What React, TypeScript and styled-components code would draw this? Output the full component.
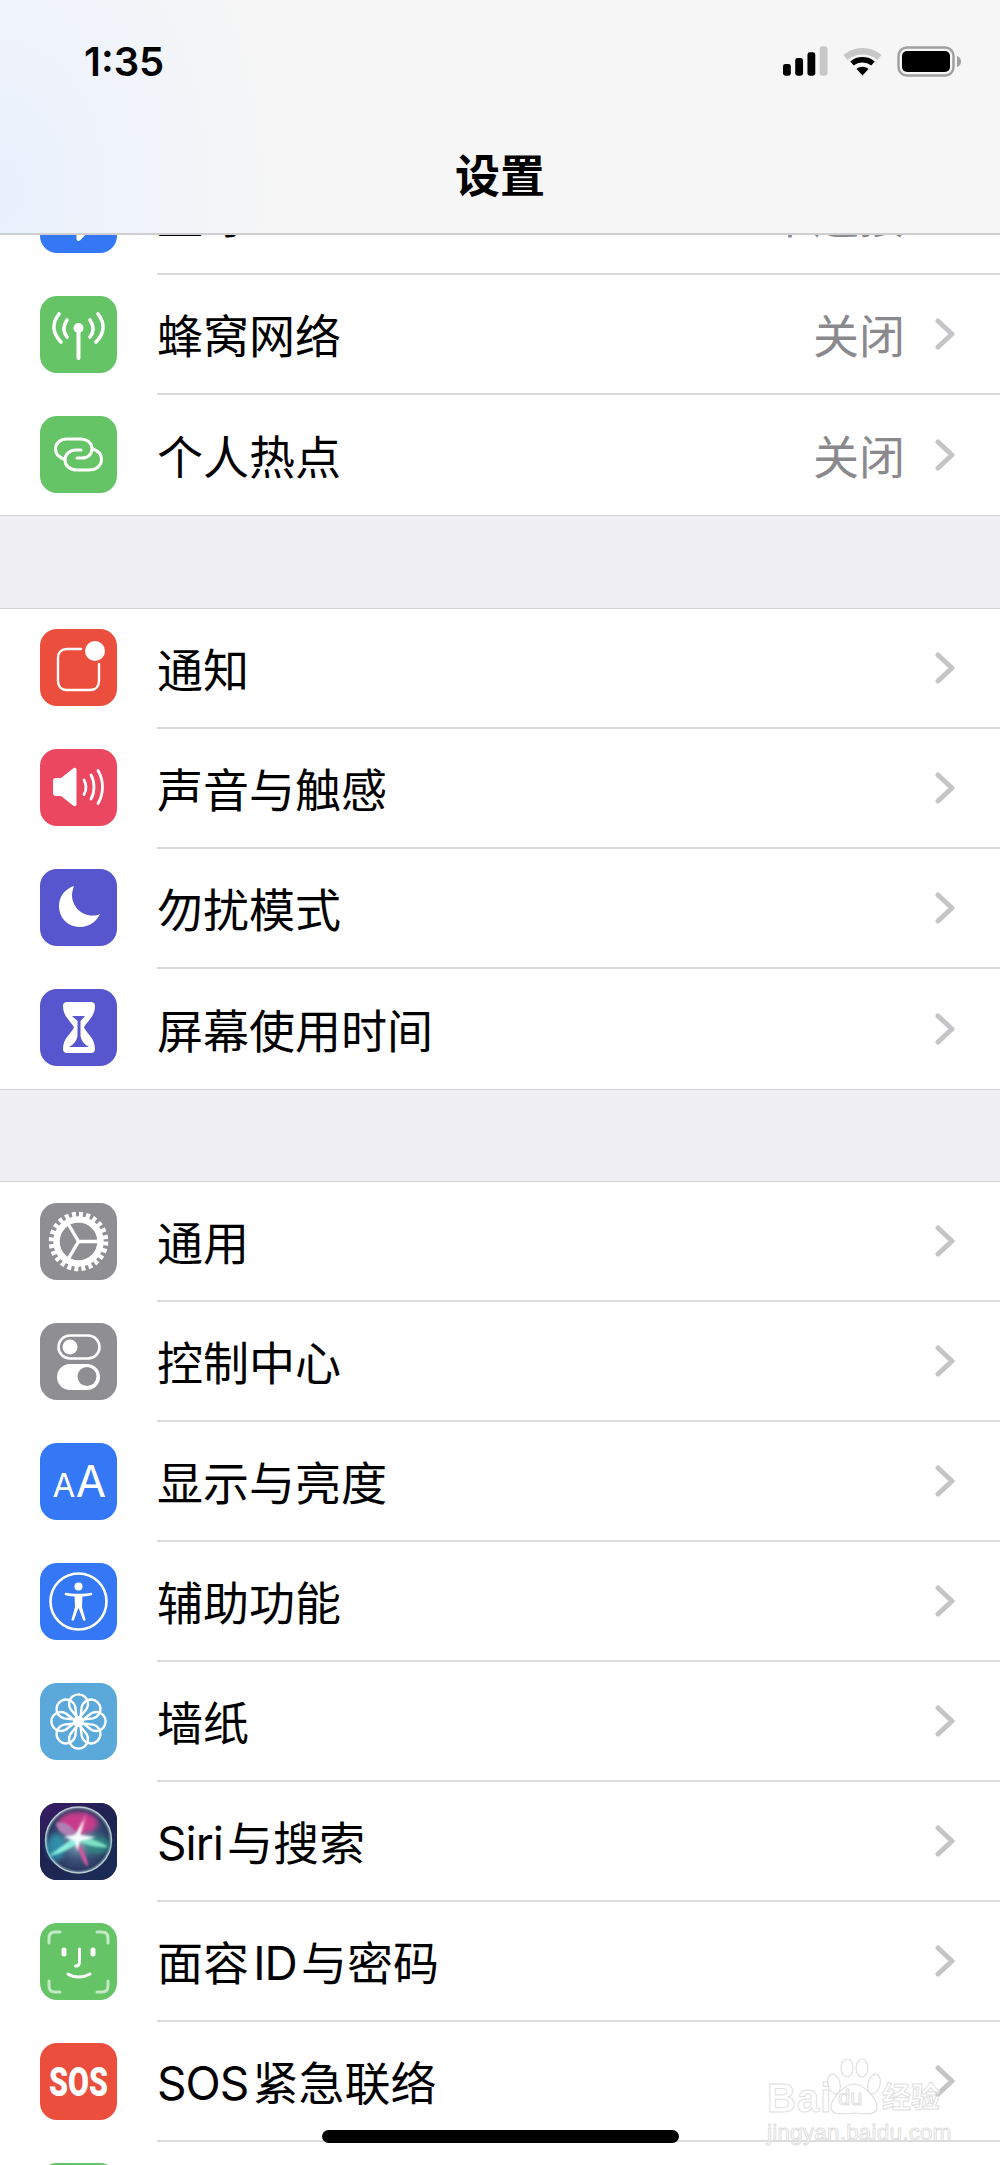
import React from "react";
import styled, { createGlobalStyle } from "styled-components";

const GlobalStyle = createGlobalStyle`
  html, body {
    margin: 0;
    padding: 0;
    background: #fff;
  }
  body {
    font-family: "Inter", "Noto Sans CJK SC", sans-serif;
    color: #000;
  }
`;

const Phone = styled.div`
  position: relative;
  width: 1000px;
  height: 2165px;
  overflow: hidden;
  background: #efeff4;
`;

const Header = styled.header`
  position: relative;
  z-index: 2;
  height: 235px;
  box-sizing: border-box;
  border-bottom: 2px solid #cfcfd2;
  background:
    radial-gradient(ellipse 280px 400px at 0 190px, #e9f1fd 0%, rgba(238, 243, 251, 0.85) 45%, rgba(245, 245, 245, 0) 100%),
    #f6f6f6;
`;

const StatusBar = styled.div`
  height: 122px;
  display: flex;
  align-items: center;
  justify-content: space-between;
  padding: 0 38px 0 84px;
`;

const Clock = styled.span`
  font-size: 40px;
  font-weight: 600;
`;

const StatusIcons = styled.div`
  display: flex;
  align-items: center;
  gap: 14px;
`;

const Title = styled.h1`
  margin: 0;
  height: 103px;
  display: flex;
  align-items: center;
  justify-content: center;
  font-size: 45px;
  font-weight: 700;
`;

const Scroller = styled.main`
  margin-top: -80px;
  display: flex;
  flex-direction: column;
  gap: 91.5px;
`;

const Group = styled.section`
  background: #fff;
  border-top: 1px solid #d2d2d6;
  border-bottom: 1px solid #d2d2d6;

  &:first-child {
    border-top: 0;
  }
`;

const Row = styled.div`
  height: 120px;
  display: flex;
  align-items: center;
  padding-left: 40px;
`;

const Tile = styled.div<{ $bg: string }>`
  flex: none;
  width: 77px;
  height: 77px;
  margin-bottom: 2px;
  border-radius: 17px;
  overflow: hidden;
  background: ${(p) => p.$bg};
  display: flex;

  svg {
    display: block;
  }
`;

const RowBody = styled.div<{ $last?: boolean }>`
  flex: 1;
  height: 100%;
  box-sizing: border-box;
  margin-left: 40px;
  padding-right: 45px;
  display: flex;
  align-items: center;
  border-bottom: ${(p) => (p.$last ? "0" : "2px solid #dcdcdf")};
`;

const Label = styled.span`
  flex: 1;
  padding-bottom: 2px;
  font-size: 46px;
  white-space: pre;
`;

const Latin = styled.span`
  letter-spacing: -1px;
`;

const Value = styled.span`
  padding-bottom: 2px;
  font-size: 46px;
  color: #8a8a8e;
  margin-right: 30px;
`;

const HomeBar = styled.div`
  position: absolute;
  z-index: 3;
  left: 322px;
  bottom: 22px;
  width: 357px;
  height: 13px;
  border-radius: 7px;
  background: #000;
`;

const Watermark = styled.div`
  position: absolute;
  z-index: 3;
  left: 767px;
  top: 2058px;
  width: 180px;
  height: 86px;
  pointer-events: none;
  font-family: "Liberation Sans", "Noto Sans CJK SC", sans-serif;
  color: rgba(255, 255, 255, 0.55);
  -webkit-text-stroke: 1px #dfdfdf;
`;

const MarkBrand = styled.div`
  display: flex;
  align-items: center;
  height: 34px;
  margin-top: 23px;
  font-size: 40px;
  font-weight: 700;
  line-height: 34px;
`;

const MarkPaw = styled.svg`
  position: absolute;
  left: 60px;
  top: 0;
`;

const MarkBai = styled.span`
  width: 64px;
  letter-spacing: 1px;
`;

const MarkDu = styled.span`
  position: relative;
  width: 50px;
  padding-left: 7px;
  box-sizing: border-box;
  font-size: 22px;
  font-weight: 400;
`;

const MarkCn = styled.span`
  font-size: 29px;
  font-weight: 700;
  white-space: nowrap;
  margin-left: 1px;
`;

const MarkSite = styled.div`
  margin-top: 6px;
  font-size: 22.5px;
  line-height: 24px;
  white-space: nowrap;
  letter-spacing: 0.2px;
`;

const Glyph = ({ children }: { children: React.ReactNode }) => (
  <svg width="77" height="77" viewBox="0 0 77 77" fill="none" stroke="#fff" strokeLinecap="round" strokeLinejoin="round">
    {children}
  </svg>
);

const Chevron = () => (
  <svg width="20" height="32" viewBox="0 0 20 32" fill="none" stroke="#c5c5c8" strokeWidth="5" strokeLinecap="round" strokeLinejoin="round">
    <path d="M3 3 L17 16 L3 29" />
  </svg>
);

const BluetoothIcon = () => (
  <Glyph>
    <path strokeWidth="4" d="M26 26 L51 50 L38.5 63 V14 L51 27 L26 51" />
  </Glyph>
);

const CellularIcon = () => (
  <Glyph>
    <circle cx="38.5" cy="32" r="5" fill="#fff" stroke="none" />
    <path strokeWidth="4" d="M38.5 32 V62" />
    <path strokeWidth="3.6" d="M27 24 C23 30 23 36 27 41 M50 24 C54 30 54 36 50 41" />
    <path strokeWidth="3.6" d="M19 18 C12 27 12 37 21 46 M58 18 C65 27 65 37 56 46" />
  </Glyph>
);

const HotspotIcon = () => (
  <Glyph>
    <g strokeWidth="3">
      <path d="M24 43 C18 41 15.5 37 15.5 33 C15.5 27 20.5 23 27 23 H40 C47 23 52 27 52 32.5 C52 38 48 42 42 42 H37" />
      <path d="M53 33 C59 35 61.5 39 61.5 43 C61.5 50 56 54 49 54 H37 C30 54 25 50 25 44 C25 38 30 34 36 34 H41" />
    </g>
  </Glyph>
);

const NotifyIcon = () => (
  <Glyph>
    <path strokeWidth="2.4" d="M41 20 H27 C21.5 20 18 23.5 18 29 V52 C18 57.5 21.5 61 27 61 H50 C55.5 61 59 57.5 59 52 V35" />
    <circle cx="55" cy="22" r="10" fill="#fff" stroke="none" />
  </Glyph>
);

const SoundIcon = () => (
  <Glyph>
    <path fill="#fff" stroke="none" d="M16 29 H21 L33 19.5 C35 18 36.5 19 36.5 21 V55 C36.5 57 35 58 33 56.5 L21 47 H16 C14 47 13 46 13 44 V32 C13 30 14 29 16 29 Z" />
    <path strokeWidth="2.8" d="M44 31 C46.5 35.5 46.5 41 44 45.5" />
    <path strokeWidth="2.8" d="M51 26 C55 33 55 43 51 50" />
    <path strokeWidth="2.8" d="M58 21.5 C64 31.5 64 44.5 58 54.5" />
  </Glyph>
);

const MoonIcon = () => (
  <Glyph>
    <path fill="#fff" stroke="none" d="M34 17 C24.5 20 19 28 19 37 C19 49 28 58 40 58 C49 58 56 53 60 45 C58 46 55 46.5 52 46.5 C41 46.5 32 37 32 26 C32 23 33 20 34 17 Z" />
  </Glyph>
);

const HourglassIcon = () => (
  <Glyph>
    <path fill="#fff" stroke="none" d="M27 13 H51 Q55 13 55 17 C55 28 47 32 44 38.5 C47 45 55 49 55 60 Q55 64 51 64 H27 Q23 64 23 60 C23 49 31 45 34 38.5 C31 32 23 28 23 17 Q23 13 27 13 Z" />
    <path fill="#5856ce" stroke="none" d="M32 27 H45 L40.5 32 V47 Q41.5 54 49 58 H29 Q36.5 54 37.5 47 V32 Z" />
  </Glyph>
);

const GearIcon = () => (
  <Glyph>
    <circle cx="38.5" cy="38.5" r="27" strokeWidth="5.5" strokeLinecap="butt" strokeDasharray="4 3.07" />
    <circle cx="38.5" cy="38.5" r="22" strokeWidth="6.5" />
    <path strokeWidth="3.4" d="M38.5 38.5 H58 M38.5 38.5 L28.5 21.5 M38.5 38.5 L28.5 55.5" />
  </Glyph>
);

const TogglesIcon = () => (
  <Glyph>
    <rect x="18.5" y="12.5" width="41" height="23" rx="11.5" strokeWidth="2.6" />
    <circle cx="30" cy="24" r="7.5" fill="#fff" stroke="none" />
    <rect x="17" y="41" width="43" height="26" rx="13" fill="#fff" stroke="none" />
    <circle cx="47" cy="53.5" r="9.5" fill="#8e8e93" stroke="none" />
  </Glyph>
);

const DisplayIcon = () => (
  <svg width="77" height="77" viewBox="0 0 77 77" fill="#fff" fontFamily="Inter, sans-serif">
    <text x="24" y="54" fontSize="33" textAnchor="middle">A</text>
    <text x="51" y="54" fontSize="44" textAnchor="middle">A</text>
  </svg>
);

const AccessIcon = () => (
  <Glyph>
    <circle cx="38.5" cy="38.5" r="28" strokeWidth="2.6" />
    <circle cx="38.5" cy="23.5" r="4" fill="#fff" stroke="none" />
    <path strokeWidth="2.6" d="M26 31 C31 32.5 46 32.5 51 31" />
    <path fill="#fff" stroke="none" d="M34.5 32 H42.5 L42 44 L45.5 56.5 C45.5 58 43.5 58 43 57 L38.8 45.5 H38.2 L34 57 C33.5 58 31.5 58 31.5 56.5 L35 44 Z" />
  </Glyph>
);

const FlowerIcon = () => (
  <Glyph>
    {[0, 45, 90, 135, 180, 225, 270, 315].map((a) => (
      <path
        key={a}
        transform={`rotate(${a} 38.5 38.5)`}
        strokeWidth="2.4"
        d="M30.5 26 A9.5 9.5 0 1 1 46.5 26 L38.5 36 Z"
      />
    ))}
    <circle cx="38.5" cy="38.5" r="5.5" fill="#fff" stroke="none" />
  </Glyph>
);

const SiriIcon = () => (
  <svg width="77" height="77" viewBox="0 0 77 77">
    <defs>
      <linearGradient id="siriBg" x1="0" y1="0" x2="0.6" y2="1">
        <stop offset="0" stopColor="#3a1a66" />
        <stop offset="0.5" stopColor="#1f2350" />
        <stop offset="1" stopColor="#1b2b55" />
      </linearGradient>
      <radialGradient id="siriOrb" cx="0.5" cy="0.5" r="0.5">
        <stop offset="0" stopColor="#8fb8c4" />
        <stop offset="0.6" stopColor="#3c5478" />
        <stop offset="0.9" stopColor="#2c3a64" />
        <stop offset="1" stopColor="#7ea0ac" />
      </radialGradient>
      <filter id="siriSoft" x="-30%" y="-30%" width="160%" height="160%">
        <feGaussianBlur stdDeviation="0.8" />
      </filter>
      <filter id="siriWide" x="-40%" y="-40%" width="180%" height="180%">
        <feGaussianBlur stdDeviation="2.5" />
      </filter>
    </defs>
    <rect width="77" height="77" fill="url(#siriBg)" />
    <circle cx="38.5" cy="37" r="33" fill="url(#siriOrb)" stroke="#b9ccd0" strokeWidth="1.4" />
    <ellipse cx="38" cy="20" rx="20" ry="11" fill="#c83a8a" filter="url(#siriWide)" />
    <ellipse cx="16" cy="44" rx="9" ry="13" fill="#2fa4bb" opacity="0.75" filter="url(#siriWide)" />
    <ellipse cx="58" cy="42" rx="12" ry="9" fill="#2f8f84" opacity="0.85" filter="url(#siriWide)" />
    <g filter="url(#siriSoft)">
      <path fill="#b07fb4" d="M16 20 C28 16 36 28 38 36 C30 34 18 32 16 20 Z" />
      <path fill="#dc55a0" d="M36 36 C42 44 48 56 48 64 C43 61 38 46 36 36 Z" />
      <path fill="#dc55a0" d="M46 10 C47 20 44 30 39 36 C38 28 41 18 46 10 Z" />
      <path fill="#8af0de" d="M9 53 C20 44 30 37 38 33 L41 38 C32 45 20 51 9 53 Z" />
      <path fill="#7fe0c4" d="M38 34 C48 34 60 38 68 44 C58 45 46 42 38 38 Z" />
      <path fill="#f4fdff" d="M44 16 L40 32 L56 34 L40 38 L37 48 L35 38 L24 34 L35 32 Z" />
    </g>
  </svg>
);

const FaceIdIcon = () => (
  <Glyph>
    <path strokeWidth="3" opacity="0.62" d="M9 20 V15 C9 11 11 9 15 9 H20 M57 9 H62 C66 9 68 11 68 15 V20 M68 58 V63 C68 67 66 69 62 69 H57 M20 69 H15 C11 69 9 67 9 63 V58" />
    <path strokeWidth="5" d="M24 27 V31 M53 27 V31" />
    <path strokeWidth="3" d="M39.5 26 V39 C39.5 42 38 43 35.5 43" />
    <path strokeWidth="3" d="M28 51 C34 55 43 55 50 51" />
  </Glyph>
);

const SosIcon = () => (
  <svg width="77" height="77" viewBox="0 0 77 77" fill="#fff" fontFamily="Roboto, sans-serif">
    <text transform="translate(38.5 53) scale(0.76 1)" textAnchor="middle" fontSize="40" fontWeight="900">SOS</text>
  </svg>
);

type Item = { icon?: React.ReactNode; bg: string; label?: React.ReactNode; value?: string };

const GREEN = "#65c466";
const INDIGO = "#5856ce";
const GRAY = "#8e8e93";
const BLUE = "#3478f6";
const RED = "#eb4e3d";

const groups: Item[][] = [
  [
    { icon: <BluetoothIcon />, bg: BLUE, label: "蓝牙", value: "未连接" },
    { icon: <CellularIcon />, bg: GREEN, label: "蜂窝网络", value: "关闭" },
    { icon: <HotspotIcon />, bg: GREEN, label: "个人热点", value: "关闭" },
  ],
  [
    { icon: <NotifyIcon />, bg: RED, label: "通知" },
    { icon: <SoundIcon />, bg: "#eb4760", label: "声音与触感" },
    { icon: <MoonIcon />, bg: INDIGO, label: "勿扰模式" },
    { icon: <HourglassIcon />, bg: INDIGO, label: "屏幕使用时间" },
  ],
  [
    { icon: <GearIcon />, bg: GRAY, label: "通用" },
    { icon: <TogglesIcon />, bg: GRAY, label: "控制中心" },
    { icon: <DisplayIcon />, bg: BLUE, label: "显示与亮度" },
    { icon: <AccessIcon />, bg: BLUE, label: "辅助功能" },
    { icon: <FlowerIcon />, bg: "#5aa9da", label: "墙纸" },
    { icon: <SiriIcon />, bg: "#1f2350", label: <><Latin>Siri</Latin>{"\u200A"}与搜索</> },
    { icon: <FaceIdIcon />, bg: GREEN, label: <>面容{"\u200A"}<Latin>ID</Latin>{"\u200A"}与密码</> },
    { icon: <SosIcon />, bg: RED, label: <><Latin>SOS</Latin>{"\u200A"}紧急联络</> },
    { bg: GREEN },
  ],
];

const App = () => (
  <Phone>
    <GlobalStyle />
    <Header>
      <StatusBar>
        <Clock>1:35</Clock>
        <StatusIcons>
          <svg width="45" height="30" viewBox="0 0 46 30">
            <rect x="0" y="18" width="8" height="12" rx="2.5" />
            <rect x="12.5" y="12" width="8" height="18" rx="2.5" />
            <rect x="25" y="6" width="8" height="24" rx="2.5" />
            <rect x="37.5" y="0" width="8" height="30" rx="2.5" fill="#c8c8c8" />
          </svg>
          <svg width="41" height="30" viewBox="0 0 41 30" fill="none">
            <path d="M3.5 11.5 C13 3 28 3 37.5 11.5" stroke="#c8c8c8" strokeWidth="6.5" />
            <path d="M10 17.5 C16 12.5 25 12.5 31 17.5" stroke="#000" strokeWidth="5.5" />
            <path d="M14.5 23 C18 20 23 20 26.5 23 L20.5 29.5 Z" fill="#000" />
          </svg>
          <svg width="65" height="31" viewBox="0 0 65 31">
            <rect x="1.5" y="1.5" width="55" height="28" rx="8.5" fill="none" stroke="#a0a0a0" strokeWidth="2.5" />
            <rect x="5" y="5" width="48" height="21" rx="5" />
            <path d="M60 10 C63 11 64 13 64 15.5 C64 18 63 20 60 21 Z" fill="#a0a0a0" />
          </svg>
        </StatusIcons>
      </StatusBar>
      <Title>设置</Title>
    </Header>
    <Scroller>
      {groups.map((items, g) => (
        <Group key={g}>
          {items.map((item, i) => (
            <Row key={i}>
              <Tile $bg={item.bg}>{item.icon}</Tile>
              <RowBody $last={i === items.length - 1}>
                <Label>{item.label}</Label>
                {item.value && <Value>{item.value}</Value>}
                {item.label && <Chevron />}
              </RowBody>
            </Row>
          ))}
        </Group>
      ))}
    </Scroller>
    <HomeBar />
    <Watermark>
      <MarkPaw width="54" height="57" viewBox="0 0 54 57" fill="rgba(255,255,255,0.5)" stroke="#dfdfdf" strokeWidth="1.2">
        <ellipse cx="7" cy="26" rx="6" ry="10" transform="rotate(-15 7 26)" />
        <ellipse cx="20" cy="10" rx="6" ry="9" />
        <ellipse cx="35" cy="10" rx="6" ry="9" />
        <ellipse cx="47" cy="26" rx="6" ry="10" transform="rotate(15 47 26)" />
        <path d="M27 26 C36 26 50 40 50 49 C50 56 43 57 27 55 C11 57 4 56 4 49 C4 40 18 26 27 26 Z" />
      </MarkPaw>
      <MarkBrand>
        <MarkBai>Bai</MarkBai>
        <MarkDu>du</MarkDu>
        <MarkCn>经验</MarkCn>
      </MarkBrand>
      <MarkSite>jingyan.baidu.com</MarkSite>
    </Watermark>
  </Phone>
);

export default App;
